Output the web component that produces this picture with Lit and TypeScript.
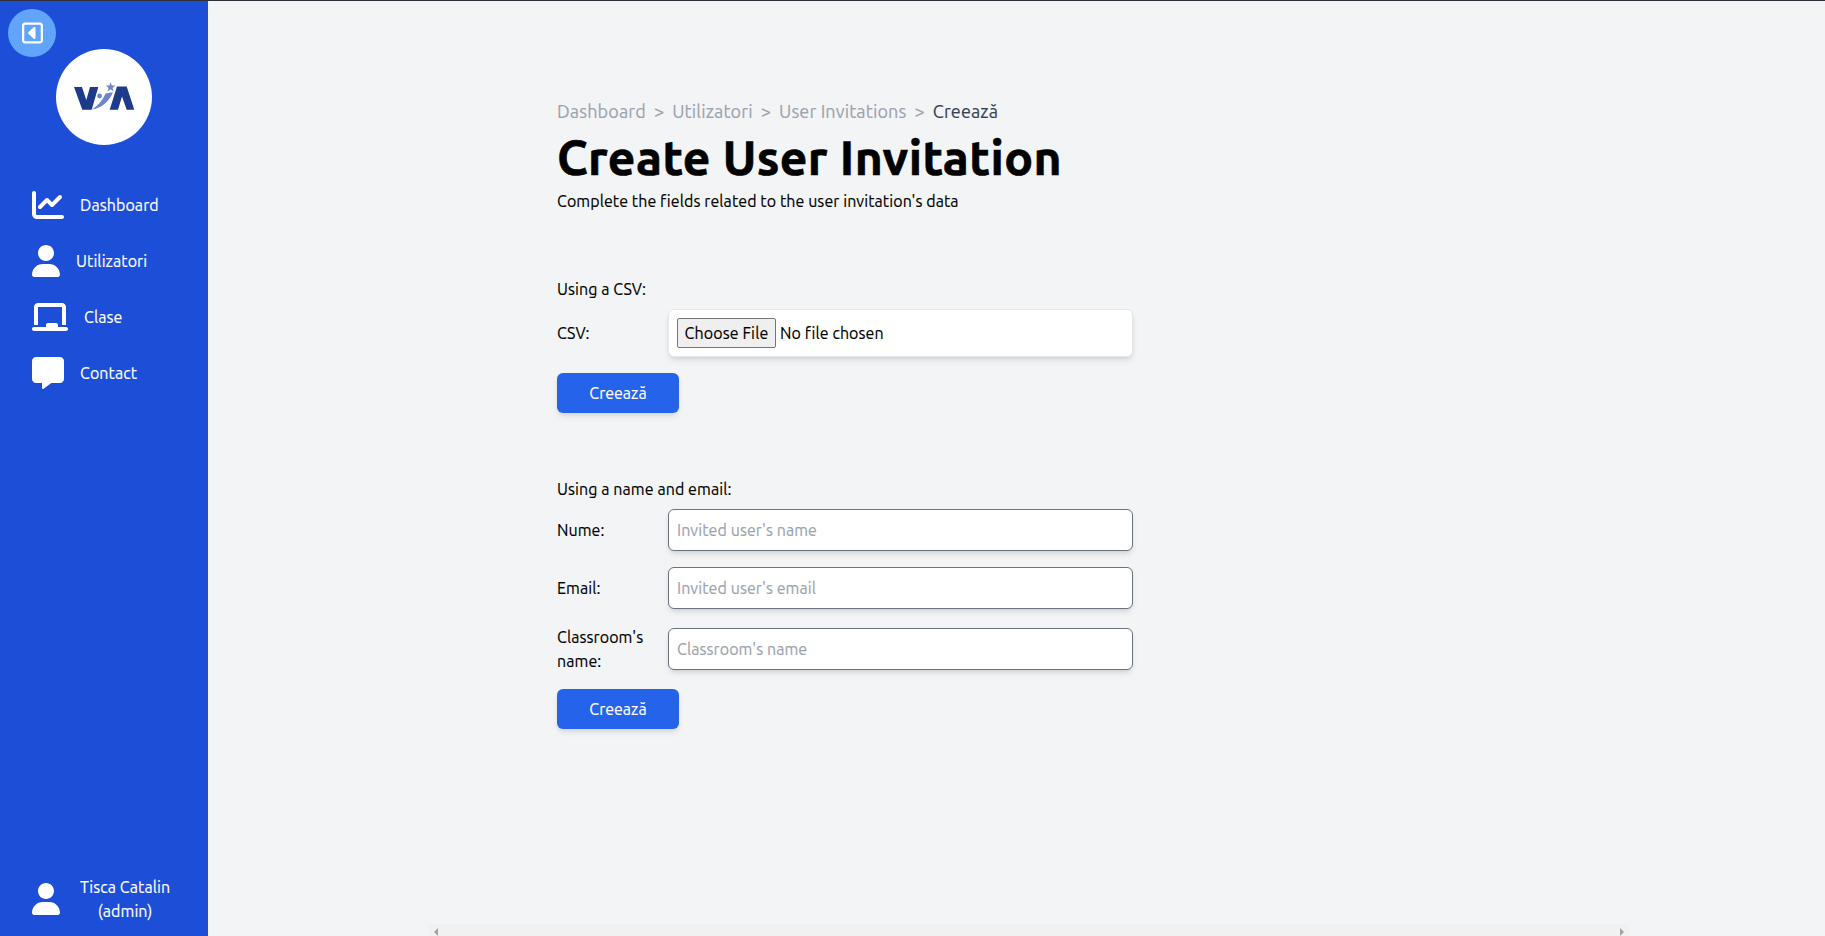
import { LitElement, html, css, svg } from "lit";
import { customElement } from "lit/decorators.js";

const icons = {
  chart: { w: 512, d: "M64 64c0-17.7-14.3-32-32-32S0 46.3 0 64V400c0 44.2 35.8 80 80 80H480c17.7 0 32-14.3 32-32s-14.3-32-32-32H80c-8.8 0-16-7.2-16-16V64zm406.6 86.6c12.5-12.5 12.5-32.8 0-45.3s-32.8-12.5-45.3 0L320 210.7l-57.4-57.4c-12.5-12.5-32.8-12.5-45.3 0l-112 112c-12.5 12.5-12.5 32.8 0 45.3s32.8 12.5 45.3 0L240 221.3l57.4 57.4c12.5 12.5 32.8 12.5 45.3 0l128-128z" },
  user: { w: 448, d: "M224 256c70.7 0 128-57.31 128-128s-57.3-128-128-128C153.3 0 96 57.31 96 128S153.3 256 224 256zM274.7 304H173.3C77.61 304 0 381.6 0 477.3c0 19.14 15.52 34.67 34.66 34.67h378.7C432.5 512 448 496.5 448 477.3C448 381.6 370.4 304 274.7 304z" },
  board: { w: 576, d: "M96 32C60.7 32 32 60.7 32 96V384H96V96l384 0V384h64V96c0-35.3-28.7-64-64-64H96zM224 384v32H32c-17.7 0-32 14.3-32 32s14.3 32 32 32H544c17.7 0 32-14.3 32-32s-14.3-32-32-32H416V384c0-17.7-14.3-32-32-32H256c-17.7 0-32 14.3-32 32z" },
  message: { w: 512, d: "M64 0C28.7 0 0 28.7 0 64V352c0 35.3 28.7 64 64 64h96v80c0 6.1 3.4 11.6 8.8 14.3s11.9 2.1 16.8-1.5L309.3 416H448c35.3 0 64-28.7 64-64V64c0-35.3-28.7-64-64-64H64z" },
  collapse: { w: 448, d: "M48 416c0 8.8 7.2 16 16 16l320 0c8.8 0 16-7.2 16-16l0-320c0-8.8-7.2-16-16-16L64 80c-8.8 0-16 7.2-16 16l0 320zm16 64c-35.3 0-64-28.7-64-64L0 96C0 60.7 28.7 32 64 32l320 0c35.3 0 64 28.7 64 64l0 320c0 35.3-28.7 64-64 64L64 480zm64-224c0-6.7 2.8-13 7.7-17.6l112-104c7-6.5 17.2-8.2 25.9-4.4s14.4 12.5 14.4 22l0 208c0 9.5-5.7 18.2-14.4 22s-18.9 2.1-25.9-4.4l-112-104c-4.9-4.5-7.7-10.9-7.7-17.6z" },
};
type IconName = keyof typeof icons;

const icon = (name: IconName, size = 32) => {
  const { w, d } = icons[name];
  return html`<svg class="icon" width=${(w / 512) * size} height=${size} viewBox="0 0 ${w} 512">${svg`<path fill="currentColor" d=${d}></path>`}</svg>`;
};

@customElement("side-bar")
export class SideBar extends LitElement {
  static styles = css`
    :host { display: flex; flex-direction: column; flex: none; width: 208px; box-sizing: border-box; padding: 8px 8px 13px; background: #1d4ed8; color: #fff; }
    .icon { display: block; flex: none; }
    .toggle { display: flex; align-items: center; justify-content: center; width: 48px; height: 48px; padding: 0; border: 0; border-radius: 50%; background: #60a5fa; color: #fff; }
    .logo { display: flex; align-items: center; justify-content: center; align-self: center; width: 96px; height: 96px; margin-top: -8px; border-radius: 50%; background: #fff; }
    nav { display: flex; flex-direction: column; margin-top: 32px; flex: 1; }
    .item { display: flex; align-items: center; gap: 16px; height: 56px; padding-left: 24px; line-height: 24px; }
    .account { display: flex; align-items: center; gap: 20px; padding-left: 24px; line-height: 24px; text-align: center; }
  `;
  render() {
    const items: [IconName, string][] = [["chart", "Dashboard"], ["user", "Utilizatori"], ["board", "Clase"], ["message", "Contact"]];
    return html`
      <button class="toggle" aria-label="Meniu">${icon("collapse", 24)}</button>
      <div class="logo">
        <svg width="96" height="96" viewBox="56 49 96 96">
          <path fill="#1e3a8a" d="M74 87h8l4.3 13L90 87h8.3l-6.6 22.7h-9.4zM109.7 109.7L117 86.5h9.7l7.6 23.2h-7.6L122 96.5l-4 13.2z"/>
          <path fill="#6b86c9" d="M92 109.6Q101 104 105.6 93.6L113 92.3Q106.5 107 92 109.6zM110.6 82l1.2 3.6h3.5l-2.7 2.3 1.1 3.6-3.1-2.2-3.1 2.2 1.1-3.6-2.7-2.3h3.5z"/>
          <circle fill="#6b86c9" cx="99.6" cy="96" r="2.4"/>
        </svg>
      </div>
      <nav>${items.map(([i, t]) => html`<div class="item">${icon(i)}<span>${t}</span></div>`)}</nav>
      <div class="account">${icon("user")}<span>Tisca Catalin<br />(admin)</span></div>`;
  }
}

@customElement("invitation-page")
export class InvitationPage extends LitElement {
  static styles = css`
    :host { display: flex; flex-direction: column; flex: 1; padding: 96px 0 0 221px; }
    .page { display: flex; flex-direction: column; flex: 1; width: 576px; padding-left: 128px; line-height: 24px; }
    .crumbs { display: flex; gap: 8px; font-size: 18px; line-height: 28px; letter-spacing: 0.13px; color: #9ca3af; }
    .here { color: #374151; }
    h1 { margin: 8px 0; font-size: 48px; line-height: 48px; font-weight: 700; letter-spacing: 0.42px; -webkit-text-stroke: 0.7px #000; }
    form { display: flex; flex-direction: column; gap: 16px; margin-top: 64px; }
    .lead { margin-bottom: -8px; }
    .row { display: flex; align-items: center; justify-content: space-between; }
    label { width: 100px; }
    .field { box-sizing: border-box; width: 465px; height: 42px; padding: 8px 8px; border: 1px solid #6b7280; border-radius: 6px; background: #fff; font: inherit; letter-spacing: inherit; box-shadow: 0 4px 6px -1px #0000001a, 0 2px 4px -2px #0000001a; }
    .field::placeholder { color: #9ca3af; opacity: 1; }
    .file { display: flex; align-items: center; gap: 4px; height: 48px; border-color: #e5e7eb; }
    .choose { box-sizing: border-box; width: 99px; height: 30px; padding: 1px 6px; border: 1px solid #767676; border-radius: 2px; background: #efefef; color: #000; font: inherit; letter-spacing: 0.13px; white-space: nowrap; }
    .submit { width: 122px; height: 40px; padding: 0; border: 0; border-radius: 6px; background: #2563eb; color: #fff; font: inherit; box-shadow: 0 4px 6px -1px #0000001a, 0 2px 4px -2px #0000001a; }
    .scroll { display: flex; align-items: center; justify-content: space-between; box-sizing: border-box; width: 1200px; height: 12px; padding: 3px 5px 0; background: #f1f1f1; }
    .scroll svg { display: block; }
  `;
  render() {
    const fields: [string, string][] = [["Nume:", "Invited user's name"], ["Email:", "Invited user's email"], ["Classroom's name:", "Classroom's name"]];
    return html`
      <div class="page">
        <div class="crumbs"><span>Dashboard</span><span>&gt;</span><span>Utilizatori</span><span>&gt;</span><span>User Invitations</span><span>&gt;</span><span class="here">Creează</span></div>
        <h1>Create User Invitation</h1>
        <div>Complete the fields related to the user invitation's data</div>
        <form>
          <div class="lead">Using a CSV:</div>
          <div class="row"><label>CSV:</label><div class="field file"><button type="button" class="choose">Choose File</button><span>No file chosen</span></div></div>
          <button type="button" class="submit">Creează</button>
        </form>
        <form>
          <div class="lead">Using a name and email:</div>
          ${fields.map(([l, p]) => html`<div class="row"><label>${l}</label><input class="field" placeholder=${p} /></div>`)}
          <button type="button" class="submit">Creează</button>
        </form>
      </div>
      <div class="scroll">
        <svg width="4" height="8"><path fill="#a3a3a3" d="M4 0v8L0 4z"/></svg>
        <svg width="4" height="8"><path fill="#a3a3a3" d="M0 0v8l4-4z"/></svg>
      </div>`;
  }
}

@customElement("app-root")
export class AppRoot extends LitElement {
  static styles = css`
    :host { display: flex; box-sizing: border-box; height: 100vh; overflow: hidden; border-top: 1px solid #2e2e38; background: #f3f4f6; color: #000; font: 16px/24px Ubuntu, "Noto Sans", sans-serif; letter-spacing: 0.083px; -webkit-text-stroke: 0.15px; }
  `;
  render() {
    return html`<side-bar></side-bar><invitation-page></invitation-page>`;
  }
}
